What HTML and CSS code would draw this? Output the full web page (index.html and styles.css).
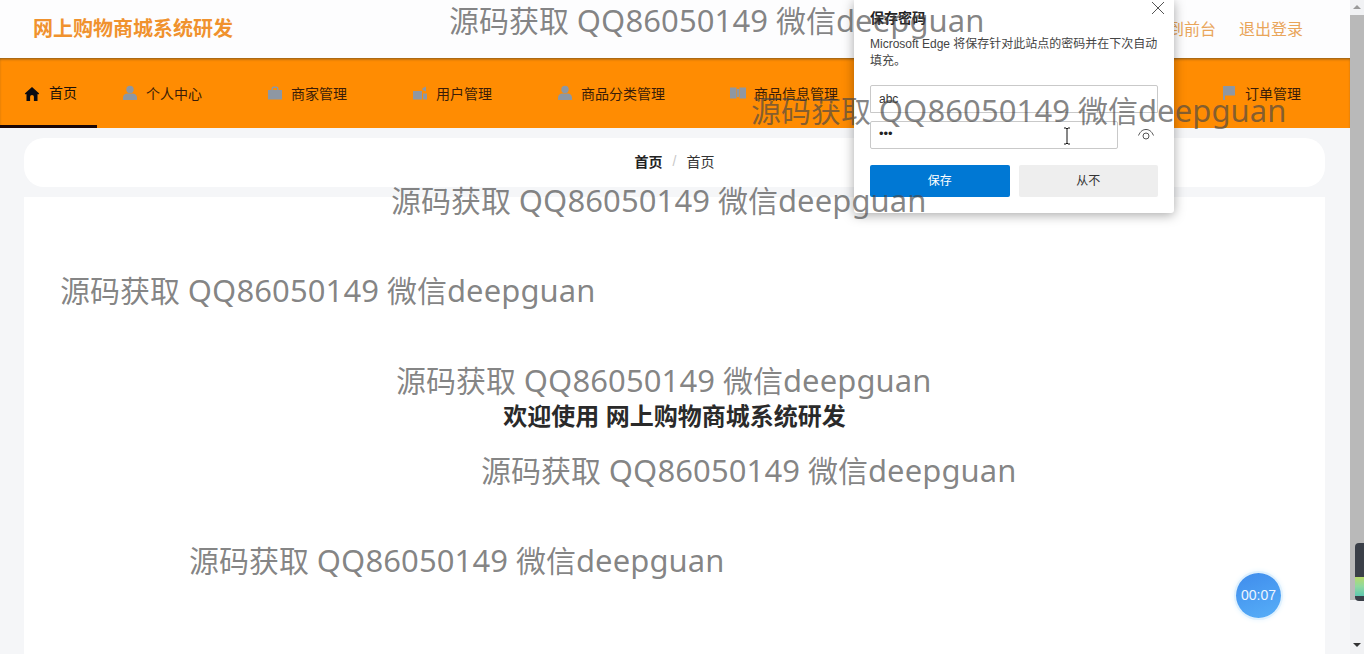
FILE: index.html
```html
<!DOCTYPE html>
<html lang="zh-CN">
<head>
<meta charset="utf-8">
<title>网上购物商城系统研发</title>
<link rel="stylesheet" href="styles.css">
</head>
<body>
<div class="page">
  <header class="topbar">
    <div class="brand">网上购物商城系统研发</div>
    <div class="top-links"><span>退出到前台</span><span>退出登录</span></div>
  </header>
  <nav class="nav">
    <a class="nav-item home">
      <svg class="ico" viewBox="0 0 16 16"><path fill="#0b0b12" d="M8 1 .8 7.4l1 1.100.7-.6V15h3.600v-4.200a1.900 1.900 0 0 1 3.800 0V15h3.600V7.900l.7.6 1-1.100z"/></svg>
      <span class="lbl">首页</span>
    </a>
    <a class="nav-item first">
      <svg class="ico" viewBox="0 0 16 16"><circle cx="8" cy="4.400" r="3.700" fill="#8e97a3"/><path fill="#8e97a3" d="M1 15v-2.600C1 10 3.400 8.800 5.400 8.600h5.200c2 .2 4.400 1.400 4.400 3.800V15z"/></svg>
      <span class="lbl">个人中心</span>
    </a>
    <a class="nav-item w145">
      <svg class="ico" viewBox="0 0 16 16"><path fill="#8e97a3" d="M4.500 5V3.400a2 2 0 0 1 2-2h3a2 2 0 0 1 2 2V5H15v9.500H1V5zM6 5h4V3H6z"/></svg>
      <span class="lbl">商家管理</span>
    </a>
    <a class="nav-item w145">
      <svg class="ico" viewBox="0 0 16 16"><path fill="#8e97a3" d="M1 6h9v8.500H1zM10.500 3.200l3.500-1.700v5L10.500 5zM11 8.500h4v6h-4z"/></svg>
      <span class="lbl">用户管理</span>
    </a>
    <a class="nav-item w173">
      <svg class="ico" viewBox="0 0 16 16"><circle cx="8" cy="4.400" r="3.700" fill="#8e97a3"/><path fill="#8e97a3" d="M1 15v-2.600C1 10 3.400 8.800 5.400 8.600h5.200c2 .2 4.400 1.400 4.400 3.800V15z"/></svg>
      <span class="lbl">商品分类管理</span>
    </a>
    <a class="nav-item w173">
      <svg class="ico" viewBox="0 0 16 16"><path fill="#8e97a3" d="M0 2.500h6.500v11H0zM9.500 2.500H16v11H9.500zM7 4h2v8H7z"/></svg>
      <span class="lbl">商品信息管理</span>
    </a>
    <a class="nav-item order">
      <svg class="ico" viewBox="0 0 16 16"><path fill="#8e97a3" d="M2 1h12v9.500H4V15H2z"/></svg>
      <span class="lbl">订单管理</span>
    </a>
  </nav>
  <main class="main">
    <div class="crumb"><b>首页</b><i>/</i><span>首页</span></div>
    <section class="panel"><h1 class="welcome">欢迎使用 网上购物商城系统研发</h1></section>
  </main>
</div>

<aside class="dialog">
  <svg class="close" viewBox="0 0 14 14"><path d="M1 1l12 12M13 1 1 13" stroke="#555" stroke-width="1" fill="none"/></svg>
  <div class="d-title">保存密码</div>
  <p class="d-text">Microsoft Edge 将保存针对此站点的密码并在下次自动填充。</p>
  <div class="field user">abc</div>
  <div class="pw-row">
    <div class="field pass">•••</div>
    <svg class="eye" viewBox="0 0 18 14"><path d="M1.500 7.500C3.500 3 6 1.500 9 1.500s5.500 1.500 7.500 6" fill="none" stroke="#555"/><circle cx="9" cy="8" r="3" fill="none" stroke="#555"/></svg>
  </div>
  <div class="d-btns"><button class="btn primary">保存</button><button class="btn">从不</button></div>
</aside>

<div class="mark m1">源码获取 <span class="lat">QQ86050149</span> 微信<span class="lat">deepguan</span></div>
<div class="mark m2">源码获取 <span class="lat">QQ86050149</span> 微信<span class="lat">deepguan</span></div>
<div class="mark m3">源码获取 <span class="lat">QQ86050149</span> 微信<span class="lat">deepguan</span></div>
<div class="mark m4">源码获取 <span class="lat">QQ86050149</span> 微信<span class="lat">deepguan</span></div>
<div class="mark m5">源码获取 <span class="lat">QQ86050149</span> 微信<span class="lat">deepguan</span></div>
<div class="mark m6">源码获取 <span class="lat">QQ86050149</span> 微信<span class="lat">deepguan</span></div>
<div class="mark m7">源码获取 <span class="lat">QQ86050149</span> 微信<span class="lat">deepguan</span></div>

<svg class="cursor" viewBox="0 0 8 18"><path d="M1 1h2l1 1 1-1h2M4 2v14M1 17h2l1-1 1 1h2" stroke="#111" fill="none"/></svg>

<div class="timer">00:07</div>

<div class="scrollbar">
  <div class="arrow up-arrow"></div>
  <div class="thumb"></div>
  <div class="arrow down-arrow"></div>
  <div class="widget"></div>
</div>
</body>
</html>
```
FILE: styles.css
```css
* { box-sizing: border-box; }
html, body { margin: 0; height: 100%; overflow: hidden; }
body {
  font-family: "Liberation Sans", "Noto Sans CJK SC", sans-serif;
  background: #f5f6f8;
  color: #222;
}
.page { width: 1350px; height: 654px; display: flex; flex-direction: column; overflow: hidden; }
.topbar {
  height: 58px; flex: none; background: #fdfdfe;
  display: flex; align-items: center; justify-content: space-between;
  padding: 0 47px 2px 33px;
}
.brand { font-size: 20px; font-weight: 700; color: #f0922e; margin-bottom: 2px; }
.top-links { display: flex; gap: 23px; font-size: 16px; color: #e9a55a; }
.nav {
  height: 70px; flex: none; background: #ff8c02;
  display: flex; box-shadow: inset 0 2px 3px -1px #80581f;
}
.nav-item { display: flex; align-items: center; font-size: 14px; color: #3a1c08; height: 70px; }
.nav-item.home { width: 97px; padding: 0 0 0 24px; border-bottom: 3px solid #1a0606; color: #1c1108; }
.first { width: 146px; padding-left: 25px; }
.w145 { width: 145px; padding-left: 24px; }
.w173 { width: 173px; padding-left: 24px; }
.order { margin-left: 318px; padding-left: 24px; }
.ico { width: 16px; height: 16px; margin-right: 8px; flex: none; }
.home .ico { margin: 4px 9px 0 0; }
.lbl { white-space: nowrap; }
.main { flex: 1; padding: 10px 25px 0 24px; display: flex; flex-direction: column; gap: 10px; }
.crumb {
  height: 49px; flex: none; background: #fff; border-radius: 20px; padding: 0 0 4px 0;
  display: flex; align-items: center; justify-content: center; gap: 10px;
  font-size: 14px; color: #222;
}
.crumb b { font-weight: 700; }
.crumb i { color: #c8c8c8; font-style: normal; }
.crumb span { color: #333; }
.panel { flex: 1; background: #fff; padding-top: 206px; }
.welcome { margin: 0; text-align: center; font-size: 24px; line-height: 28px; font-weight: 700; color: #2a2a2a; }
.mark {
  position: absolute; white-space: nowrap;
  font-family: "Noto Sans", "Noto Sans CJK SC", sans-serif;
  font-size: 30px; line-height: 40px; color: rgba(70, 70, 70, .66);
}
.lat { font-size: 31px; letter-spacing: .1px; }
.m1 { left: 449px; top: 0; }
.m2 { left: 751px; top: 90px; }
.m3 { left: 391px; top: 180px; }
.m4 { left: 60px; top: 270px; }
.m5 { left: 396px; top: 360px; }
.m6 { left: 481px; top: 450px; }
.m7 { left: 189px; top: 540px; }
.dialog {
  position: absolute; left: 854px; top: 0; width: 320px; height: 213px;
  background: #fff; box-shadow: 0 2px 12px rgba(0, 0, 0, .35); padding: 10px 16px 0;
  border-radius: 0 0 3px 3px;
}
.close { position: absolute; left: 297px; top: 1px; width: 14px; height: 14px; }
.d-title { font-size: 14px; line-height: 16px; font-weight: 700; color: #222; }
.d-text { margin: 10px 0 0; font-size: 12px; line-height: 17px; color: #444; width: 288px; }
.field {
  border: 1px solid #c9c9c9; border-radius: 2px; background: #fff;
  font-size: 12px; padding-left: 8px; color: #333;
}
.user { margin-top: 15px; height: 28px; line-height: 26px; border-bottom-left-radius: 0; border-bottom-right-radius: 0; }
.pw-row { display: flex; align-items: center; margin-top: 8px; }
.pass { width: 248px; height: 28px; line-height: 24px; font-size: 13px; color: #222; }
.eye { width: 18px; height: 14px; margin-left: 19px; }
.d-btns { display: flex; gap: 9px; margin-top: 16px; }
.btn {
  flex: 1; height: 32px; border: 0; border-radius: 2px; background: #eeeeee;
  font: 12px "Liberation Sans", "Noto Sans CJK SC", sans-serif; color: #333; padding: 0 0 3px;
}
.btn.primary { background: #0078d4; color: #fff; }
.cursor { position: absolute; left: 1063px; top: 127px; width: 8px; height: 18px; }
.timer {
  position: absolute; left: 1236px; top: 573px; width: 45px; height: 45px; border-radius: 50%;
  background: linear-gradient(160deg, #3f8cec, #57aff8);
  box-shadow: 0 0 0 2px #dff1fe, 0 0 4px 3px #eef8ff;
  color: #eef6ff; font-size: 14px; line-height: 45px; text-align: center;
}
.scrollbar { position: absolute; left: 1350px; top: 0; width: 14px; height: 654px; background: #f1f2f4; }
.thumb { position: absolute; left: 0; top: 15px; width: 14px; height: 585px; background: #b9b9b9; }
.arrow { position: absolute; left: 3px; width: 0; height: 0; border-left: 4px solid transparent; border-right: 4px solid transparent; }
.up-arrow { top: 5px; border-bottom: 4px solid #9a9a9a; }
.down-arrow { top: 643px; border-top: 4px solid #333; }
.widget {
  position: absolute; left: 5px; top: 543px; width: 9px; height: 58px; border-radius: 4px 0 0 4px;
  background: linear-gradient(#3a3f48 0, #3a3f48 58%, #b8d96a 58%, #8fd9a0 75%, #5cc6b0 92%, #3a3f48 92%);
}
```
